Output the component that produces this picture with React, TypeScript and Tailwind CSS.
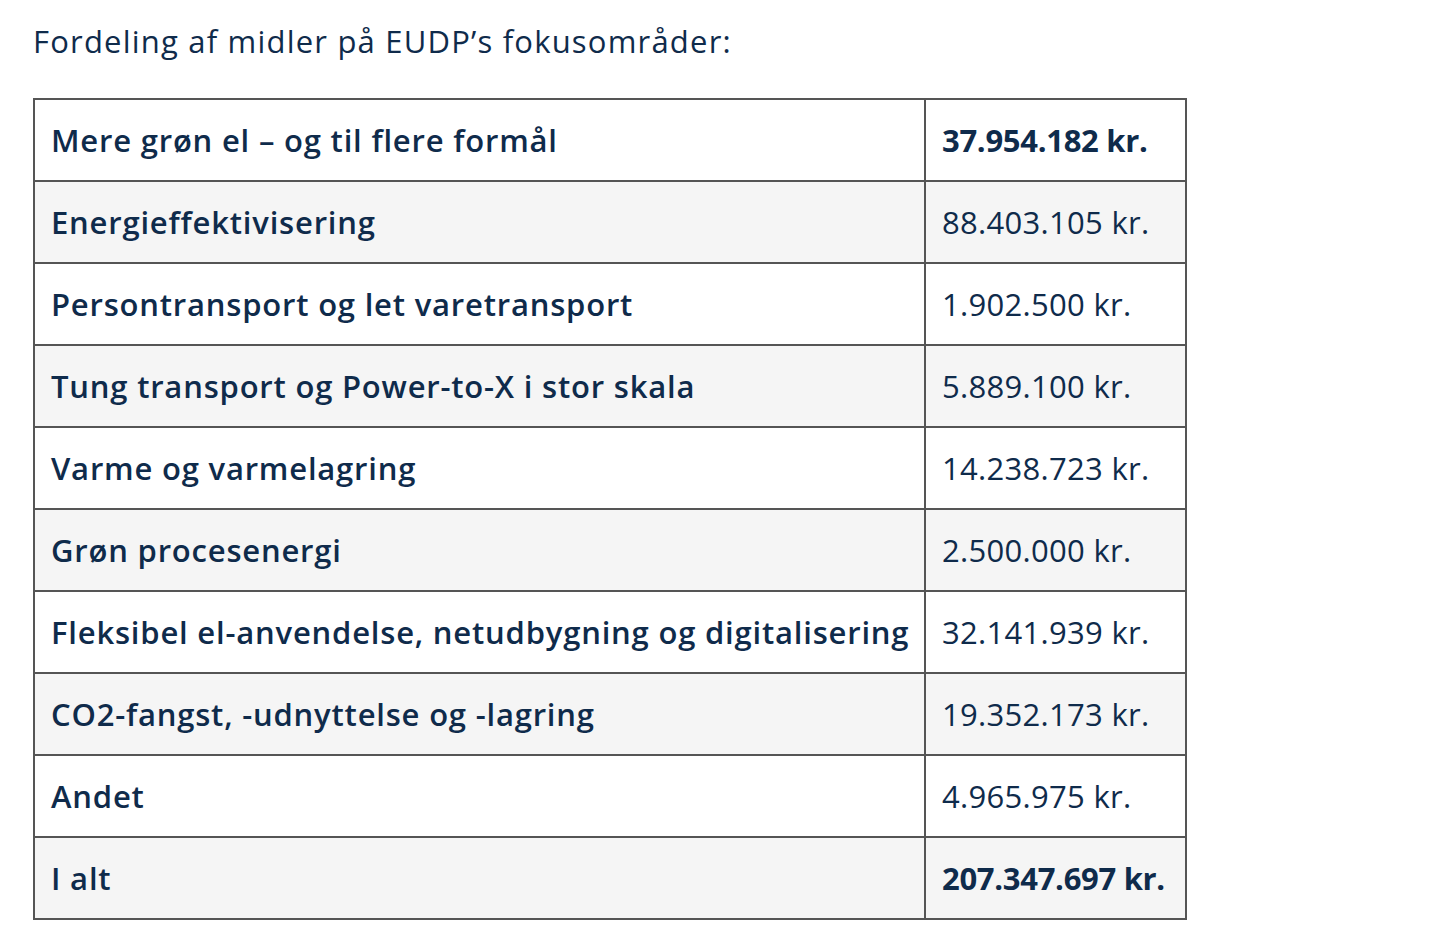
const rows: { label: string; amount: string; strong?: boolean }[] = [
  { label: "Mere grøn el – og til flere formål", amount: "37.954.182 kr.", strong: true },
  { label: "Energieffektivisering", amount: "88.403.105 kr." },
  { label: "Persontransport og let varetransport", amount: "1.902.500 kr." },
  { label: "Tung transport og Power-to-X i stor skala", amount: "5.889.100 kr." },
  { label: "Varme og varmelagring", amount: "14.238.723 kr." },
  { label: "Grøn procesenergi", amount: "2.500.000 kr." },
  { label: "Fleksibel el-anvendelse, netudbygning og digitalisering", amount: "32.141.939 kr." },
  { label: "CO2-fangst, -udnyttelse og -lagring", amount: "19.352.173 kr." },
  { label: "Andet", amount: "4.965.975 kr." },
  { label: "I alt", amount: "207.347.697 kr.", strong: true },
];

export default function App() {
  return (
    <div className="min-h-screen bg-white px-[33px] pt-[21px] text-[#0f2b4b] font-['Open_Sans',sans-serif]">
      <p className="text-[31px] leading-[40px] tracking-[1.2px]">Fordeling af midler på EUDP’s fokusområder:</p>

      <table className="mt-[37px] w-[1152px] table-fixed border-collapse border-2 border-[#555]">
        <colgroup>
          <col className="w-[891px]" />
          <col className="w-[261px]" />
        </colgroup>
        <tbody>
          {rows.map((row, i) => (
            <tr key={row.label} className={i % 2 === 1 ? "bg-[#f5f5f5]" : "bg-white"}>
              <td className="h-[82px] border-2 border-[#555] pl-[16px] text-[31px] font-semibold tracking-[0.8px]">
                {row.label}
              </td>
              <td
                className={
                  "h-[82px] border-2 border-[#555] pl-[16px] text-[31px] " +
                  (row.strong ? "font-bold tracking-[-0.3px]" : "font-normal tracking-[0.3px]")
                }
              >
                {row.amount}
              </td>
            </tr>
          ))}
        </tbody>
      </table>
    </div>
  );
}
